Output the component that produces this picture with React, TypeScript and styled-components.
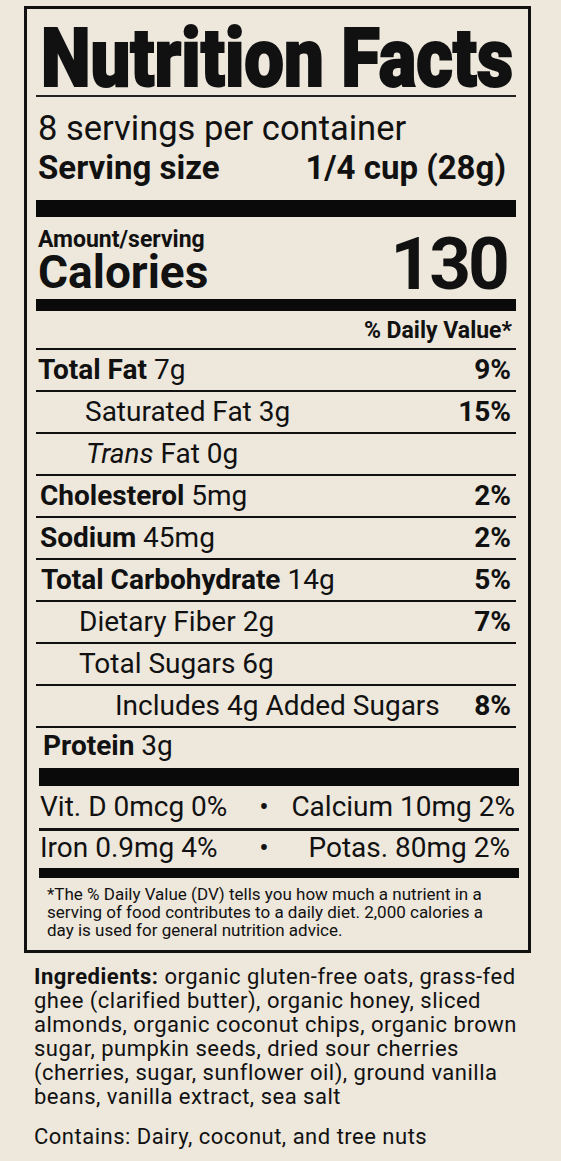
import styled, { createGlobalStyle } from "styled-components";

const GlobalStyle = createGlobalStyle`
  body {
    margin: 0;
    background: #ede7dc;
    color: #111;
    font-family: Roboto, "Liberation Sans", sans-serif;
  }
`;

type Nutrient = {
  name: string;
  amount: string;
  dv?: string;
  bold?: boolean;
  italic?: string;
  indent: number;
};

const nutrients: Nutrient[] = [
  { name: "Total Fat", amount: "7g", dv: "9%", bold: true, indent: 2 },
  { name: "Saturated Fat", amount: "3g", dv: "15%", indent: 49 },
  { name: "Fat", italic: "Trans", amount: "0g", indent: 50 },
  { name: "Cholesterol", amount: "5mg", dv: "2%", bold: true, indent: 4 },
  { name: "Sodium", amount: "45mg", dv: "2%", bold: true, indent: 4 },
  { name: "Total Carbohydrate", amount: "14g", dv: "5%", bold: true, indent: 5 },
  { name: "Dietary Fiber", amount: "2g", dv: "7%", indent: 43 },
  { name: "Total Sugars", amount: "6g", indent: 43 },
  { name: "Includes 4g Added Sugars", amount: "", dv: "8%", indent: 79 },
  { name: "Protein", amount: "3g", bold: true, indent: 7 },
];

export default function App() {
  return (
    <>
      <GlobalStyle />
      <Page>
        <Label>
          <Title>
            <TitleText>Nutrition Facts</TitleText>
          </Title>
          <Servings>
            <ServingsLine>8 servings per container</ServingsLine>
            <ServingSize>
              <span>Serving size</span>
              <span>1/4 cup (28g)</span>
            </ServingSize>
          </Servings>
          <Bar $height={17} $top={13} />
          <CalorieBlock>
            <div>
              <Amount>Amount/serving</Amount>
              <Calories>Calories</Calories>
            </div>
            <CalorieCount>130</CalorieCount>
          </CalorieBlock>
          <Bar $height={12} />
          <DailyHeader>% Daily Value*</DailyHeader>
          {nutrients.map((n, i) => (
            <Row key={n.name} $indent={n.indent} $last={i === nutrients.length - 1}>
              <span>
                {n.italic && <em>{n.italic} </em>}
                {n.bold ? <b>{n.name}</b> : n.name}
                {n.amount && ` ${n.amount}`}
              </span>
              {n.dv && <Percent>{n.dv}</Percent>}
            </Row>
          ))}
          <Lower>
            <Bar $height={18} />
            <VitRow $inset={4} $divider>
              <span>Vit. D 0mcg 0%</span>
              <Dot>•</Dot>
              <RightCell>Calcium 10mg 2%</RightCell>
            </VitRow>
            <VitRow $inset={9}>
              <span>Iron 0.9mg 4%</span>
              <Dot>•</Dot>
              <RightCell>Potas. 80mg 2%</RightCell>
            </VitRow>
            <Bar $height={10} />
            <Footnote>
              *The % Daily Value (DV) tells you how much a nutrient in a serving of food
              contributes to a daily diet. 2,000 calories a day is used for general
              nutrition advice.
            </Footnote>
          </Lower>
        </Label>
        <Ingredients>
          <b>Ingredients:</b> organic gluten-free oats, grass-fed ghee (clarified butter),
          organic honey, sliced almonds, organic coconut chips, organic brown sugar, pumpkin
          seeds, dried sour cherries (cherries, sugar, sunflower oil), ground vanilla beans,
          vanilla extract, sea salt
        </Ingredients>
        <Contains>Contains: Dairy, coconut, and tree nuts</Contains>
      </Page>
    </>
  );
}

const Page = styled.div`
  width: 561px;
  padding: 6px 0 0 24px;
  box-sizing: border-box;
`;

const Label = styled.div`
  width: 507px;
  box-sizing: border-box;
  border: 3px solid #111;
  padding: 0 12px 0 9px;
`;

const Title = styled.h1`
  margin: 0;
  padding-top: 12px;
  height: 74px;
  line-height: 74px;
  font-size: 82px;
  font-weight: 900;
  white-space: nowrap;
  border-bottom: 2px solid #222;
`;

/* condensed look: squeeze the glyphs and give the saved width back to layout */
const TitleText = styled.span`
  display: inline-block;
  transform: scaleX(0.86);
  transform-origin: left center;
  margin-left: 5px;
  margin-right: -90px;
  -webkit-text-stroke: 2px #111;
`;

const Servings = styled.div`
  padding-top: 12px;
  padding-left: 2px;
`;

const ServingsLine = styled.div`
  font-size: 34.5px;
  line-height: 39px;
`;

const ServingSize = styled.div`
  display: flex;
  justify-content: space-between;
  padding-right: 10px;
  font-size: 33px;
  font-weight: 700;
  line-height: 39px;
`;

const Bar = styled.div<{ $height: number; $top?: number }>`
  height: ${(p) => p.$height}px;
  margin-top: ${(p) => p.$top ?? 0}px;
  background: #0a0a0a;
`;

const CalorieBlock = styled.div`
  display: flex;
  justify-content: space-between;
  align-items: flex-end;
  padding: 12px 9px 5px 2px;
`;

const Amount = styled.div`
  font-size: 23px;
  font-weight: 700;
  line-height: 22px;
`;

const Calories = styled.div`
  font-size: 46px;
  font-weight: 700;
  line-height: 43px;
`;

const CalorieCount = styled.div`
  font-size: 73px;
  font-weight: 700;
  line-height: 60px;
  letter-spacing: -3px;
`;

const DailyHeader = styled.div`
  text-align: right;
  padding: 8px 4px 6px 0;
  font-size: 23px;
  font-weight: 700;
  line-height: 23px;
  border-bottom: 2px solid #111;
`;

const Row = styled.div<{ $indent: number; $last?: boolean }>`
  display: flex;
  justify-content: space-between;
  height: 40px;
  padding: 0 5px 0 ${(p) => p.$indent}px;
  font-size: 28px;
  line-height: ${(p) => (p.$last ? "36px" : "40px")};
  border-bottom: ${(p) => (p.$last ? "none" : "2px solid #111")};

  b {
    font-weight: 700;
  }
`;

const Percent = styled.span`
  font-weight: 700;
`;

const Lower = styled.div`
  margin: 0 -3px 0 3px;
`;

const VitRow = styled.div<{ $inset: number; $divider?: boolean }>`
  display: grid;
  grid-template-columns: 214px 20px 1fr;
  padding: 0 ${(p) => p.$inset}px 0 1px;
  font-size: 28px;
  line-height: ${(p) => (p.$divider ? "42px" : "33px")};
  padding-bottom: ${(p) => (p.$divider ? 0 : 4)}px;
  border-bottom: ${(p) => (p.$divider ? "3px solid #111" : "none")};
`;

const Dot = styled.span`
  text-align: center;
`;

const RightCell = styled.span`
  text-align: right;
`;

const Footnote = styled.p`
  margin: 0;
  padding: 7px 24px 11px 8px;
  font-size: 17px;
  line-height: 18px;
`;

const Ingredients = styled.p`
  margin: 12px 0 0;
  width: 490px;
  padding-left: 10px;
  font-size: 22px;
  letter-spacing: 0.5px;
  line-height: 24px;
`;

const Contains = styled.p`
  margin: 16px 0 0;
  padding-left: 10px;
  font-size: 22px;
  letter-spacing: 0.5px;
  line-height: 24px;
`;
